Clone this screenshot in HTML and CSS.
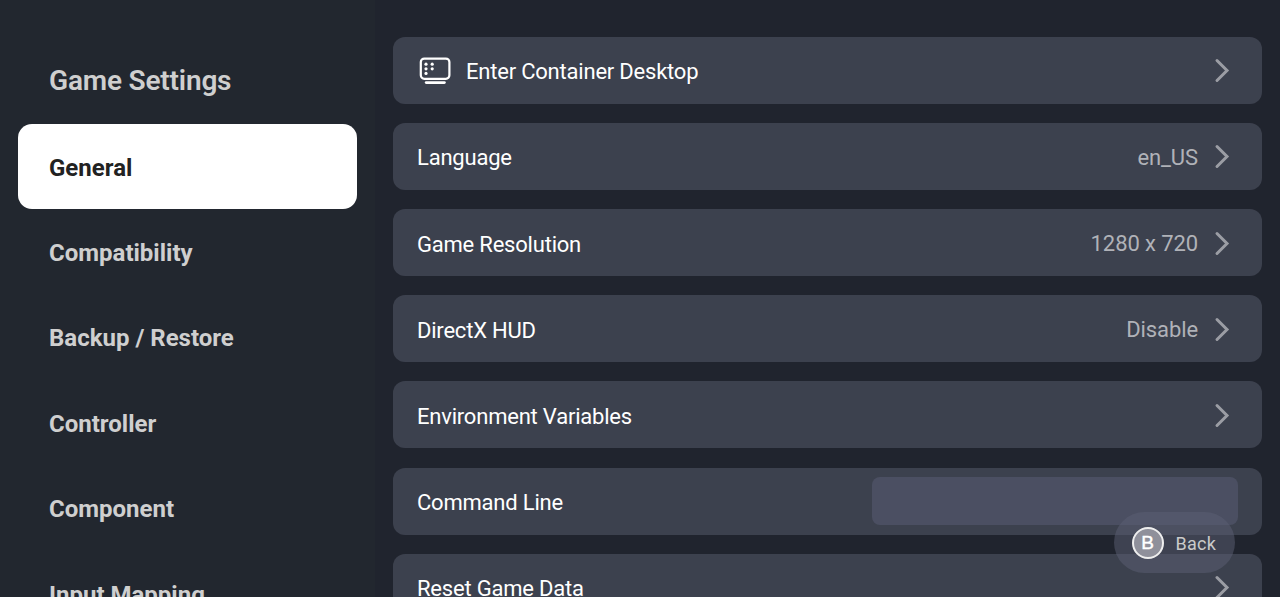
FILE: index.html
```
<!DOCTYPE html>
<html lang="en">
<head>
    <meta charset="UTF-8">
    <title>Game Settings</title>
    <link rel="stylesheet" href="styles.css">
</head>
<body>
    <svg class="defs" width="0" height="0">
        <symbol id="chevron" viewBox="0 0 16 26">
            <path d="M3 3.5 L13 13.5 L3 23.5" fill="none" stroke="currentColor" stroke-width="3" stroke-linecap="round" stroke-linejoin="miter"/>
        </symbol>
    </svg>

    <nav class="sidebar">
        <h1 class="title">Game Settings</h1>
        <a class="tab active">General</a>
        <a class="tab">Compatibility</a>
        <a class="tab">Backup / Restore</a>
        <a class="tab">Controller</a>
        <a class="tab">Component</a>
        <a class="tab">Input Mapping</a>
    </nav>

    <main class="content">
        <div class="row">
            <svg class="desktop-icon" viewBox="0 0 32 28">
                <rect x="1.8" y="1.6" width="28.6" height="20.2" rx="3.5" fill="none" stroke="#fff" stroke-width="2.2"/>
                <path d="M7.2 25.6 H25.4" stroke="#fff" stroke-width="2.8" stroke-linecap="round"/>
                <g fill="#fff">
                    <circle cx="7" cy="7.2" r="1.6"/>
                    <circle cx="13.2" cy="7.2" r="1.6"/>
                    <circle cx="7" cy="11.8" r="1.6"/>
                    <circle cx="13.2" cy="11.8" r="1.6"/>
                    <circle cx="7" cy="16.4" r="1.6"/>
                </g>
            </svg>
            <span class="label">Enter Container Desktop</span>
            <svg class="chevron"><use href="#chevron"/></svg>
        </div>
        <div class="row">
            <span class="label">Language</span>
            <span class="value">en_US</span>
            <svg class="chevron"><use href="#chevron"/></svg>
        </div>
        <div class="row">
            <span class="label">Game Resolution</span>
            <span class="value">1280 x 720</span>
            <svg class="chevron"><use href="#chevron"/></svg>
        </div>
        <div class="row">
            <span class="label">DirectX HUD</span>
            <span class="value">Disable</span>
            <svg class="chevron"><use href="#chevron"/></svg>
        </div>
        <div class="row">
            <span class="label">Environment Variables</span>
            <svg class="chevron"><use href="#chevron"/></svg>
        </div>
        <div class="row">
            <span class="label">Command Line</span>
            <div class="field"></div>
        </div>
        <div class="row">
            <span class="label">Reset Game Data</span>
            <svg class="chevron"><use href="#chevron"/></svg>
        </div>
    </main>

    <div class="back">
        <span class="key">B</span>
        <span class="back-label">Back</span>
    </div>
</body>
</html>
```

FILE: styles.css
```
* {
    box-sizing: border-box;
}
body {
    margin: 0;
    height: 597px;
    display: flex;
    overflow: hidden;
    background-color: #20242e;
    color: #fff;
    font-family: Roboto, sans-serif;
}
.defs {
    position: absolute;
}
.sidebar {
    width: 374.5px;
    flex-shrink: 0;
    padding: 37px 18px 0;
    background-color: #22272f;
    color: #cfcfcf;
}
.title {
    height: 86.7px;
    margin: 0;
    padding-left: 31px;
    font-size: 28px;
    font-weight: 600;
    line-height: 88.7px;
    letter-spacing: -0.18px;
}
.tab {
    display: block;
    height: 85.4px;
    padding-left: 31px;
    border-radius: 14px;
    font-size: 24px;
    font-weight: 700;
    line-height: 89px;
}
.tab.active {
    background-color: #fff;
    color: #222;
}
.content {
    flex: 1;
    display: flex;
    flex-direction: column;
    gap: 19.2px;
    padding: 36.7px 18px 0 18.5px;
}
.row {
    display: flex;
    align-items: center;
    flex-shrink: 0;
    height: 67px;
    padding: 0 24px;
    border-radius: 12px;
    background-color: #3c414e;
    font-size: 22px;
}
.label {
    flex: 1;
    padding-top: 3px;
    letter-spacing: -0.21px;
}
.value {
    padding-top: 2px;
    margin-right: 16px;
    color: #b0b2b8;
    letter-spacing: -0.1px;
}
.chevron {
    width: 16px;
    height: 26px;
    margin-right: 8px;
    color: #9b9da4;
}
.desktop-icon {
    width: 32px;
    height: 28px;
    margin: 2px 15px 0 2px;
}
.field {
    width: 366px;
    height: 48px;
    border-radius: 8px;
    background-color: #4b4f62;
}
/* floats over the list */
.back {
    position: absolute;
    right: 45.5px;
    bottom: 24px;
    width: 121px;
    height: 61px;
    display: flex;
    align-items: center;
    gap: 12px;
    padding-left: 18px;
    border-radius: 31px;
    background-color: rgba(92, 96, 116, 0.5);
    color: #cacaca;
    font-size: 18px;
}
.back-label {
    padding-top: 2px;
    letter-spacing: 0.3px;
}
.key {
    width: 32px;
    height: 32px;
    border: 2px solid #eee;
    border-radius: 50%;
    background-color: #8f909b;
    color: #fff;
    font-family: "Liberation Sans", sans-serif;
    font-size: 19px;
    line-height: 28px;
    text-align: center;
    -webkit-text-stroke: 0.4px #fff;
}
```
